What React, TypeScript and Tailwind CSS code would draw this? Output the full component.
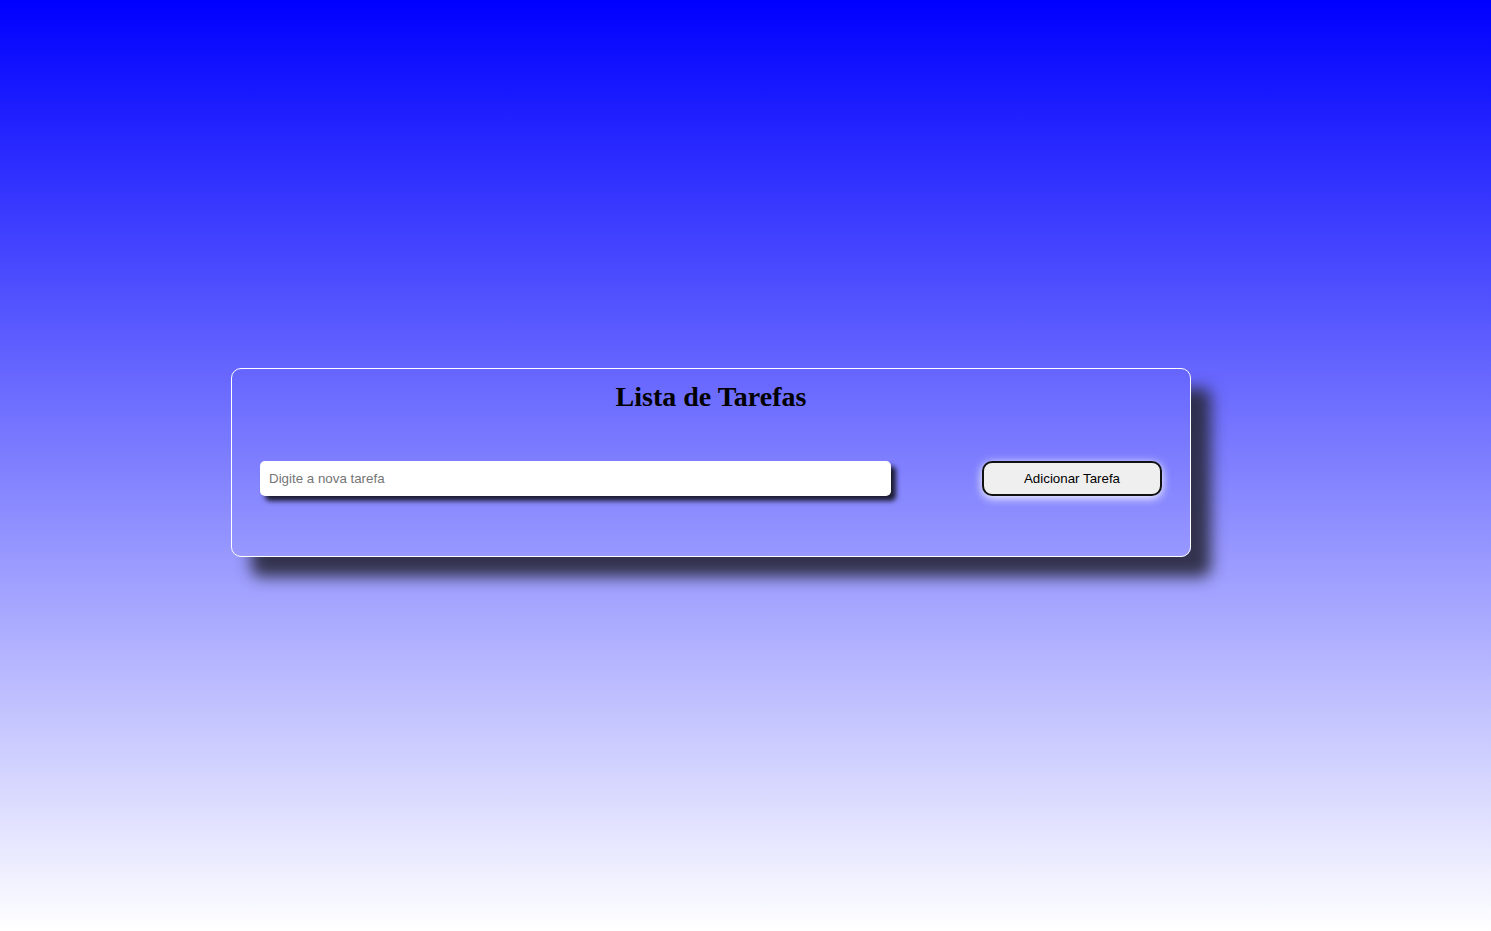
import React, { useState } from 'react';

const App: React.FC = () => {
  const [task, setTask] = useState('');

  return (
    <div className="min-h-screen w-full bg-[linear-gradient(to_bottom,#0000ff,#ffffff)] flex items-center">
      <div className="ml-[231px] mb-[6px] w-[960px] h-[189px] border border-white rounded-[10px] shadow-[20px_20px_15px_rgba(40,40,60,0.9)] px-[28px] pt-[10px]">
        <h1
          className="text-center font-bold text-[28px] leading-[36px] text-black"
          style={{ fontFamily: '"Liberation Serif", "Times New Roman", serif' }}
        >
          Lista de Tarefas
        </h1>
        <div className="mt-[46px] flex items-center justify-between">
          <input
            type="text"
            value={task}
            onChange={(e) => setTask(e.target.value)}
            placeholder="Digite a nova tarefa"
            className="w-[631px] h-[35px] bg-white rounded-[5px] px-[9px] text-[13.333px] text-black placeholder:text-[#757575] outline-none shadow-[5px_5px_5px_rgba(0,0,0,0.8)]"
            style={{ fontFamily: '"Liberation Sans", Arial, sans-serif' }}
          />
          <button
            className="w-[180px] h-[35px] bg-[#efefef] border-2 border-[#111] rounded-[10px] text-[13.333px] text-black shadow-[0_2px_10px_white]"
            style={{ fontFamily: '"Liberation Sans", Arial, sans-serif' }}
          >
            Adicionar Tarefa
          </button>
        </div>
      </div>
    </div>
  );
};

export default App;
